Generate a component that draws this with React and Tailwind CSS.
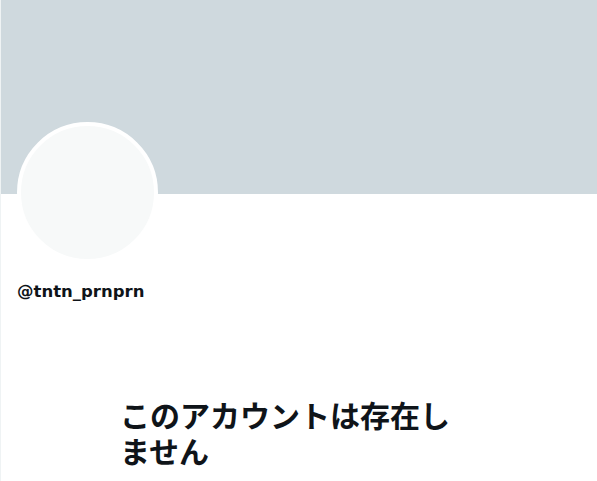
import React from 'react';

export default function App() {
    return (
        <div className="min-h-[481px] w-[597px] bg-white border-l border-[#eff3f4] text-[#0f1419] font-['Liberation_Sans','Noto_Sans_CJK_JP',sans-serif] overflow-hidden">
            {/* Banner */}
            <div className="h-[194px] bg-[#cfd9de]"></div>

            <div className="px-4">
                <div className="-mt-[72px] w-[141px] h-[141px] rounded-full border-4 border-white bg-[#f7f9f9]"></div>
                <div className="mt-[19px] text-[16.5px] leading-5 font-bold font-['DejaVu_Sans',sans-serif]">@tntn_prnprn</div>
            </div>

            <div className="mt-[94px] pl-[119px] pr-[120px]">
                <h1 className="text-[30px] leading-9 font-bold font-['Noto_Sans_CJK_JP',sans-serif]">
                    このアカウントは存在しません
                </h1>
            </div>
        </div>
    );
}
